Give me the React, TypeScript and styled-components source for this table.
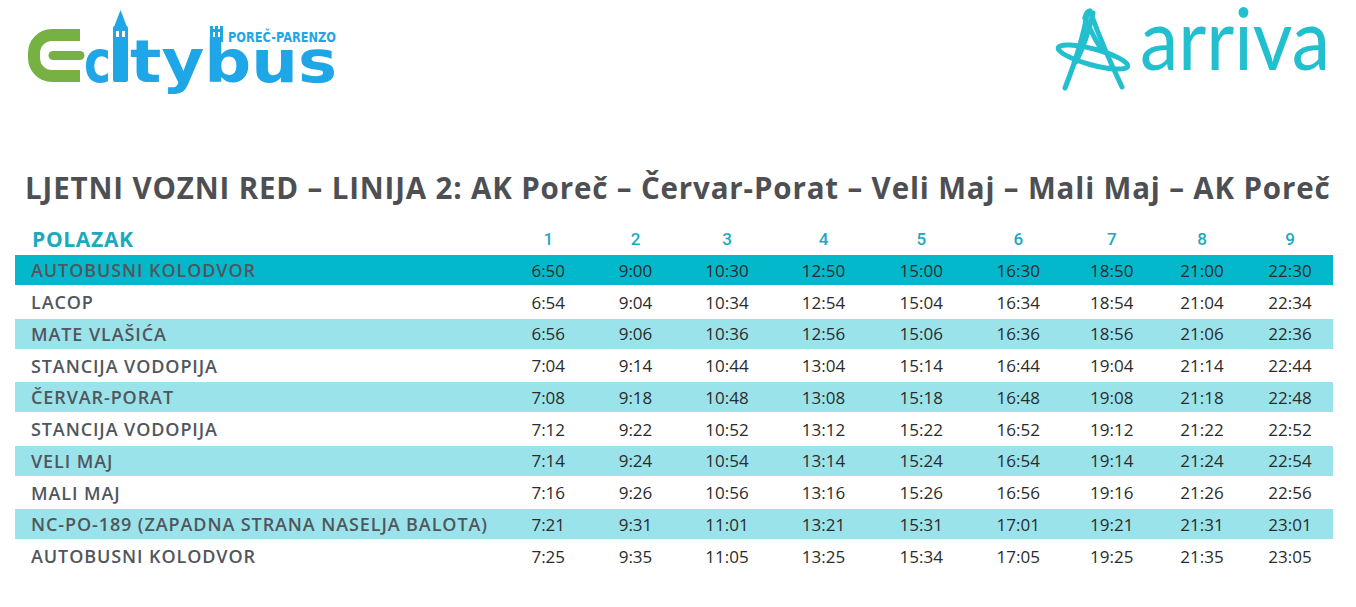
import React from 'react';
import styled, { createGlobalStyle } from 'styled-components';

const GlobalStyle = createGlobalStyle`
  html, body {
    margin: 0;
    padding: 0;
    background: #ffffff;
  }
  body {
    font-family: "Open Sans", "Lato", sans-serif;
  }
`

const Page = styled.div`
  width: 1356px;
  height: 607px;
  box-sizing: border-box;
  padding: 0 23px 0 15px;
  overflow: hidden;
`

const Header = styled.header`
  height: 120px;
  display: flex;
  justify-content: space-between;
  align-items: flex-start;
`

const Title = styled.h1`
  margin: 48px 0 0 10px;
  height: 40px;
  line-height: 40px;
  font-size: 29.5px;
  font-weight: 700;
  letter-spacing: 0.85px;
  color: #4d4f53;
  white-space: nowrap;
`

const Table = styled.div`
  margin-top: 16px;
  display: flex;
  flex-direction: column;
  gap: 1.75px;
`

const COLS = '490px 86.5px 88px 95px 98px 97.5px 96.5px 90.5px 90px 86px'

const HeadRow = styled.div`
  display: grid;
  grid-template-columns: ${COLS};
  height: 29.5px;
  align-items: center;
  color: #1aa9bf;
`

const HeadLabel = styled.div`
  padding-left: 17px;
  font-size: 21px;
  font-weight: 700;
  letter-spacing: 0.7px;
`

const HeadNum = styled.div`
  text-align: center;
  font-family: "Roboto", sans-serif;
  font-size: 17px;
  font-weight: 500;
`

const Row = styled.div<{ $tone: 'dark' | 'light' | 'none' }>`
  display: grid;
  grid-template-columns: ${COLS};
  height: 30px;
  align-items: center;
  background: ${p => p.$tone === 'dark' ? '#04b8cc' : p.$tone === 'light' ? '#9be3eb' : 'transparent'};
`

const Stop = styled.div`
  padding-left: 16px;
  font-size: 18px;
  font-weight: 600;
  letter-spacing: 0.9px;
  color: #51565c;
  white-space: nowrap;
`

const Time = styled.div`
  text-align: center;
  font-size: 17px;
  font-weight: 400;
  color: #2b2b2b;
`

const LogoText = styled.text`
  font-family: "DejaVu Sans", sans-serif;
  font-weight: 700;
`

const ArrivaText = styled.text`
  font-family: "Lato", sans-serif;
  font-weight: 400;
`

const BLUE = '#1ea6e6'
const GREEN = '#77b143'
const TEAL = '#22bfcf'

const CityBusLogo = () => (
  <svg width="330" height="105" viewBox="0 0 330 105" style={{ marginLeft: 5 }}>
    <path d="M60 35 H32 A18 18 0 0 0 14 53 V58 A18 18 0 0 0 32 76 H60" fill="none" stroke={GREEN} strokeWidth="12" />
    <path d="M33 55.5 H60" stroke={GREEN} strokeWidth="9" strokeLinecap="round" />
    <LogoText x="64" y="82" fontSize="58" fill={BLUE} textLength="27" lengthAdjust="spacingAndGlyphs">c</LogoText>
    <rect x="93" y="26" width="15" height="56" rx="2" fill={BLUE} />
    <polygon points="94,27 100.5,10 107,27" fill={BLUE} />
    <rect x="96" y="31" width="3" height="6" fill="#fff" />
    <rect x="102" y="31" width="3" height="6" fill="#fff" />
    <LogoText x="110" y="82" fontSize="58" fill={BLUE} textLength="207" lengthAdjust="spacingAndGlyphs">tybus</LogoText>
    <rect x="190" y="29" width="13" height="13" fill={BLUE} />
    <rect x="190" y="26" width="3" height="4" fill={BLUE} />
    <rect x="195" y="26" width="3" height="4" fill={BLUE} />
    <rect x="200" y="26" width="3" height="4" fill={BLUE} />
    <rect x="193" y="32" width="2" height="5" fill="#fff" />
    <rect x="198" y="32" width="2" height="5" fill="#fff" />
    <LogoText x="208" y="42" fontSize="14" fill={BLUE} textLength="108" lengthAdjust="spacingAndGlyphs">POREČ-PARENZO</LogoText>
  </svg>
)

const ArrivaLogo = () => (
  <svg width="290" height="100" viewBox="0 0 290 100">
    <g fill="none" stroke={TEAL} strokeWidth="5" strokeLinecap="round">
      <path d="M44 14 C40 40 31 65 22 88" />
      <path d="M50 13 C46 31 40 48 33 62" />
      <path d="M47 11 C56 36 67 62 79 87" />
      <path d="M42 18 C48 31 53 42 59 50" />
      <path d="M42 18 C43 13 45 11 47 11" />
      <ellipse cx="50" cy="57" rx="36" ry="8" transform="rotate(15 50 57)" />
    </g>
    <ArrivaText x="97" y="70" fontSize="86" fill={TEAL} textLength="190" lengthAdjust="spacingAndGlyphs">arriva</ArrivaText>
  </svg>
)

type Tone = 'dark' | 'light' | 'none'

const rows: { stop: string; tone: Tone; times: string[] }[] = [
  { stop: 'AUTOBUSNI KOLODVOR', tone: 'dark', times: ['6:50', '9:00', '10:30', '12:50', '15:00', '16:30', '18:50', '21:00', '22:30'] },
  { stop: 'LACOP', tone: 'none', times: ['6:54', '9:04', '10:34', '12:54', '15:04', '16:34', '18:54', '21:04', '22:34'] },
  { stop: 'MATE VLAŠIĆA', tone: 'light', times: ['6:56', '9:06', '10:36', '12:56', '15:06', '16:36', '18:56', '21:06', '22:36'] },
  { stop: 'STANCIJA VODOPIJA', tone: 'none', times: ['7:04', '9:14', '10:44', '13:04', '15:14', '16:44', '19:04', '21:14', '22:44'] },
  { stop: 'ČERVAR-PORAT', tone: 'light', times: ['7:08', '9:18', '10:48', '13:08', '15:18', '16:48', '19:08', '21:18', '22:48'] },
  { stop: 'STANCIJA VODOPIJA', tone: 'none', times: ['7:12', '9:22', '10:52', '13:12', '15:22', '16:52', '19:12', '21:22', '22:52'] },
  { stop: 'VELI MAJ', tone: 'light', times: ['7:14', '9:24', '10:54', '13:14', '15:24', '16:54', '19:14', '21:24', '22:54'] },
  { stop: 'MALI MAJ', tone: 'none', times: ['7:16', '9:26', '10:56', '13:16', '15:26', '16:56', '19:16', '21:26', '22:56'] },
  { stop: 'NC-PO-189 (ZAPADNA STRANA NASELJA BALOTA)', tone: 'light', times: ['7:21', '9:31', '11:01', '13:21', '15:31', '17:01', '19:21', '21:31', '23:01'] },
  { stop: 'AUTOBUSNI KOLODVOR', tone: 'none', times: ['7:25', '9:35', '11:05', '13:25', '15:34', '17:05', '19:25', '21:35', '23:05'] },
]

export default function App() {
  return (
    <Page>
      <GlobalStyle />
      <Header>
        <CityBusLogo />
        <ArrivaLogo />
      </Header>
      <Title>LJETNI VOZNI RED – LINIJA 2: AK Poreč – Červar-Porat – Veli Maj – Mali Maj – AK Poreč</Title>
      <Table>
        <HeadRow>
          <HeadLabel>POLAZAK</HeadLabel>
          {[1, 2, 3, 4, 5, 6, 7, 8, 9].map(n => <HeadNum key={n}>{n}</HeadNum>)}
        </HeadRow>
        {rows.map((r, i) => (
          <Row key={i} $tone={r.tone}>
            <Stop>{r.stop}</Stop>
            {r.times.map((t, j) => <Time key={j}>{t}</Time>)}
          </Row>
        ))}
      </Table>
    </Page>
  )
}
